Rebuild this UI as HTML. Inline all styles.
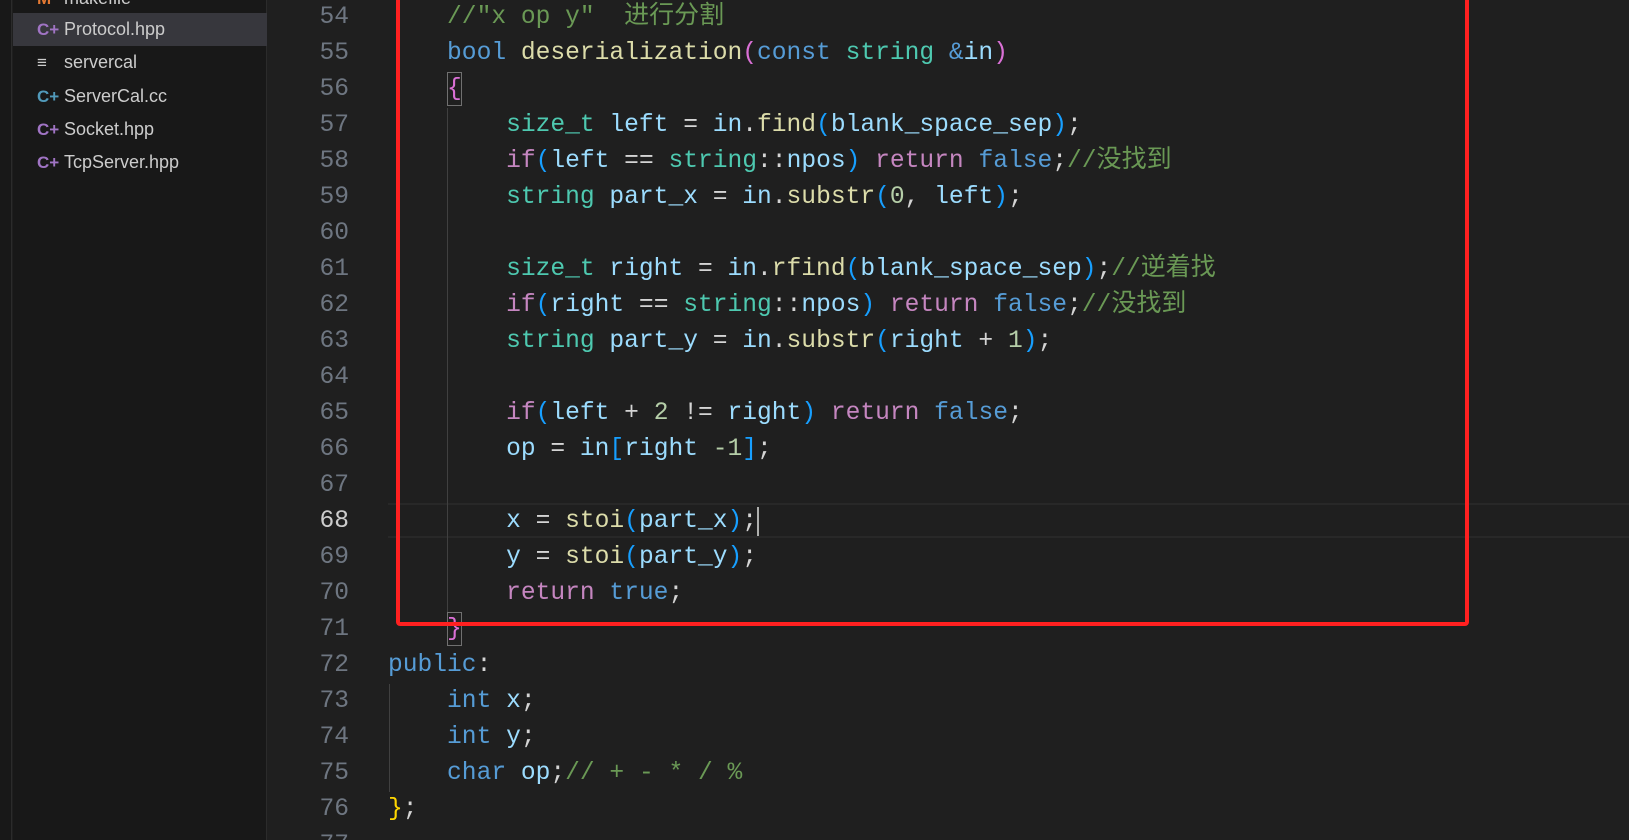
<!DOCTYPE html>
<html><head><meta charset="utf-8"><style>
*{margin:0;padding:0;box-sizing:border-box}
html{overflow:hidden;width:1629px;height:840px;background:#1f1f1f}
body{width:1629px;height:840px;overflow:hidden;background:#1f1f1f;position:relative;font-family:"Liberation Mono","Noto Sans CJK SC",monospace}
#act{position:absolute;left:0;top:0;bottom:0;width:12px;background:#181818;border-right:1px solid #2b2b2b}
#side{position:absolute;left:13px;top:0;bottom:0;width:254px;background:#181818;border-right:1px solid #2b2b2b;font-family:"Liberation Sans",sans-serif;font-size:18px;color:#cccccc}
.row{position:absolute;left:0;width:254px;height:33px;line-height:33px;padding-left:51px}
.row.sel{background:#37373d}
.ic{position:absolute;left:24px;top:0;font-weight:bold;font-size:17px}
.ln{position:absolute;left:270px;width:79px;text-align:right;color:#6e7681;font-size:24.6px;line-height:36px;height:36px}
.cl{position:absolute;left:388px;white-space:pre;font-size:24.6px;line-height:36px;height:36px;color:#d4d4d4;overflow:visible}
.k{color:#569cd6}.c{color:#c586c0}.t{color:#4ec9b0}.f{color:#dcdcaa}.v{color:#9cdcfe}.n{color:#b5cea8}.m{color:#6a9955}.p2{color:#da70d6}.p3{color:#179fff}.g{color:#ffd700}
.cj{font-family:"Noto Sans CJK SC",sans-serif;font-size:25px;line-height:0;vertical-align:baseline}
</style></head><body>
<div id="act"></div>
<div id="side">
<div class="row" style="top:-18px"><span class="ic" style="color:#e37933">M</span>makefile</div>
<div class="row sel" style="top:13px"><span class="ic" style="color:#a074c4">C+</span>Protocol.hpp</div>
<div class="row" style="top:46px"><span class="ic" style="color:#cccccc;font-weight:normal">≡</span>servercal</div>
<div class="row" style="top:80px"><span class="ic" style="color:#519aba">C+</span>ServerCal.cc</div>
<div class="row" style="top:113px"><span class="ic" style="color:#a074c4">C+</span>Socket.hpp</div>
<div class="row" style="top:146px"><span class="ic" style="color:#a074c4">C+</span>TcpServer.hpp</div>
</div>
<div style="position:absolute;left:388px;top:503px;width:1241px;height:35px;border-top:2px solid #282828;border-bottom:2px solid #282828"></div>
<div style="position:absolute;left:447px;top:108px;width:1px;height:504px;background:#404040"></div>
<div style="position:absolute;left:389px;top:684px;width:1px;height:108px;background:#404040"></div>
<div style="position:absolute;left:447px;top:72px;width:15px;height:34px;border:1px solid #707070"></div>
<div style="position:absolute;left:447px;top:612px;width:15px;height:34px;border:1px solid #707070"></div>

<div class="ln" style="top:0">54</div><div class="cl" style="top:0">    <span class="m">//"x op y"  <span class="cj">进行分割</span></span></div>
<div class="ln" style="top:36px">55</div><div class="cl" style="top:36px">    <span class="k">bool</span> <span class="f">deserialization</span><span class="p2">(</span><span class="k">const</span> <span class="t">string</span> <span class="k">&amp;</span><span class="v">in</span><span class="p2">)</span></div>
<div class="ln" style="top:72px">56</div><div class="cl" style="top:72px">    <span class="p2">{</span></div>
<div class="ln" style="top:108px">57</div><div class="cl" style="top:108px">        <span class="t">size_t</span> <span class="v">left</span> = <span class="v">in</span>.<span class="f">find</span><span class="p3">(</span><span class="v">blank_space_sep</span><span class="p3">)</span>;</div>
<div class="ln" style="top:144px">58</div><div class="cl" style="top:144px">        <span class="c">if</span><span class="p3">(</span><span class="v">left</span> == <span class="t">string</span>::<span class="v">npos</span><span class="p3">)</span> <span class="c">return</span> <span class="k">false</span>;<span class="m">//<span class="cj">没找到</span></span></div>
<div class="ln" style="top:180px">59</div><div class="cl" style="top:180px">        <span class="t">string</span> <span class="v">part_x</span> = <span class="v">in</span>.<span class="f">substr</span><span class="p3">(</span><span class="n">0</span>, <span class="v">left</span><span class="p3">)</span>;</div>
<div class="ln" style="top:216px">60</div>
<div class="ln" style="top:252px">61</div><div class="cl" style="top:252px">        <span class="t">size_t</span> <span class="v">right</span> = <span class="v">in</span>.<span class="f">rfind</span><span class="p3">(</span><span class="v">blank_space_sep</span><span class="p3">)</span>;<span class="m">//<span class="cj">逆着找</span></span></div>
<div class="ln" style="top:288px">62</div><div class="cl" style="top:288px">        <span class="c">if</span><span class="p3">(</span><span class="v">right</span> == <span class="t">string</span>::<span class="v">npos</span><span class="p3">)</span> <span class="c">return</span> <span class="k">false</span>;<span class="m">//<span class="cj">没找到</span></span></div>
<div class="ln" style="top:324px">63</div><div class="cl" style="top:324px">        <span class="t">string</span> <span class="v">part_y</span> = <span class="v">in</span>.<span class="f">substr</span><span class="p3">(</span><span class="v">right</span> + <span class="n">1</span><span class="p3">)</span>;</div>
<div class="ln" style="top:360px">64</div>
<div class="ln" style="top:396px">65</div><div class="cl" style="top:396px">        <span class="c">if</span><span class="p3">(</span><span class="v">left</span> + <span class="n">2</span> != <span class="v">right</span><span class="p3">)</span> <span class="c">return</span> <span class="k">false</span>;</div>
<div class="ln" style="top:432px">66</div><div class="cl" style="top:432px">        <span class="v">op</span> = <span class="v">in</span><span class="p3">[</span><span class="v">right</span> <span class="n">-1</span><span class="p3">]</span>;</div>
<div class="ln" style="top:468px">67</div>
<div class="ln" style="top:504px;color:#cccccc">68</div><div class="cl" style="top:504px">        <span class="v">x</span> = <span class="f">stoi</span><span class="p3">(</span><span class="v">part_x</span><span class="p3">)</span>;</div>
<div style="position:absolute;left:757px;top:507px;width:2px;height:29px;background:#aeafad"></div>
<div class="ln" style="top:540px">69</div><div class="cl" style="top:540px">        <span class="v">y</span> = <span class="f">stoi</span><span class="p3">(</span><span class="v">part_y</span><span class="p3">)</span>;</div>
<div class="ln" style="top:576px">70</div><div class="cl" style="top:576px">        <span class="c">return</span> <span class="k">true</span>;</div>
<div class="ln" style="top:612px">71</div><div class="cl" style="top:612px">    <span class="p2">}</span></div>
<div class="ln" style="top:648px">72</div><div class="cl" style="top:648px"><span class="k">public</span>:</div>
<div class="ln" style="top:684px">73</div><div class="cl" style="top:684px">    <span class="k">int</span> <span class="v">x</span>;</div>
<div class="ln" style="top:720px">74</div><div class="cl" style="top:720px">    <span class="k">int</span> <span class="v">y</span>;</div>
<div class="ln" style="top:756px">75</div><div class="cl" style="top:756px">    <span class="k">char</span> <span class="v">op</span>;<span class="m">// + - * / %</span></div>
<div class="ln" style="top:792px">76</div><div class="cl" style="top:792px"><span class="g">}</span>;</div>
<div class="ln" style="top:828px;height:12px;overflow:hidden">77</div>
<div style="position:absolute;left:396px;top:-10px;width:1073px;height:636px;border:4px solid #ff2020;border-radius:4px"></div>
</body></html>
